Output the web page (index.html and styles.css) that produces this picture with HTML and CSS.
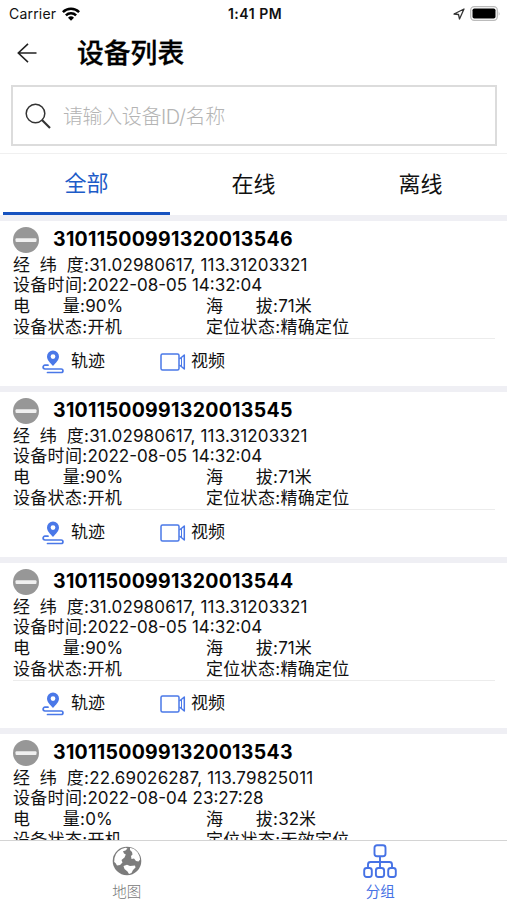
FILE: index.html
```
<!DOCTYPE html>
<html lang="zh-CN">
<head>
    <meta charset="UTF-8">
    <title>设备列表</title>
    <link rel="stylesheet" href="styles.css">
</head>
<body>
<svg class="defs">
    <symbol id="i-off" viewBox="0 0 26 26">
        <circle cx="13" cy="13" r="13" fill="#979797"/>
        <rect x="2.500" y="11.300" width="21" height="3.600" rx="1" fill="#f0f0f0"/>
    </symbol>
    <symbol id="i-track" viewBox="0 0 22 24">
        <path fill="#4a78e8" fill-rule="evenodd" d="M11 .5a6 6 0 0 1 6 6c0 3.400-3 6.200-6 9.500-3-3.300-6-6.100-6-9.500a6 6 0 0 1 6-6zm0 3.700a2.400 2.400 0 1 0 0 4.800 2.400 2.400 0 0 0 0-4.800z"/>
        <path fill="none" stroke="#4a78e8" stroke-width="1.700" stroke-linecap="round" d="M6 15.200H3a1.900 1.900 0 0 0 0 3.800h16.200a1.600 1.600 0 0 1 0 3.500H5.500"/>
    </symbol>
    <symbol id="i-video" viewBox="0 0 26 18">
        <g fill="none" stroke="#4a78e8" stroke-width="1.500" stroke-linejoin="round">
            <rect x="1" y="1" width="18" height="16" rx="1.500"/>
            <path d="M19.500 6l4.800-4v14l-4.800-4"/>
            <path d="M21.500 4.500v9" stroke-width="1"/>
        </g>
    </symbol>
</svg>
<div class="status">
    <div class="carrier">Carrier
        <svg width="18" height="14" viewBox="0 0 18 14">
            <g fill="none" stroke="#000" stroke-width="2.500">
                <path d="M.9 5.200a11.500 11.500 0 0 1 16.200 0"/>
                <path d="M3.900 8.300a7.200 7.200 0 0 1 10.200 0"/>
            </g>
            <path d="M9 13.700L6 10.700a4.300 4.300 0 0 1 6 0z"/>
        </svg>
    </div>
    <div class="time">1:41 PM</div>
    <div class="power">
        <svg width="12" height="12" viewBox="0 0 12 12"><path d="M1 6L11 1 6.500 11 5.500 6.500z" fill="none" stroke="#333" stroke-width="1.300" stroke-linejoin="round"/></svg>
        <svg width="31" height="15" viewBox="0 0 31 15">
            <rect x=".7" y=".7" width="26.600" height="13.600" rx="3.500" fill="#fff" stroke="#bbb" stroke-width="1.300"/>
            <rect x="2.500" y="2.500" width="23" height="10" rx="1.800"/>
            <path d="M28.700 5.200q1.800 2.300 0 4.600z" fill="#bbb"/>
        </svg>
    </div>
</div>
<div class="header">
    <svg width="20" height="20" viewBox="0 0 20 20"><path d="M19.500 10H1M11 .8L1.300 10l9.700 9.200" fill="none" stroke="#222" stroke-width="1.600"/></svg>
    <h1>设备列表</h1>
</div>
<div class="search">
    <svg width="26" height="26" viewBox="0 0 26 26"><circle cx="10.500" cy="10.500" r="9.300" fill="none" stroke="#333" stroke-width="1.500"/><path d="M17 17l8 8" stroke="#333" stroke-width="2.200"/></svg>
    <span>请输入设备ID/名称</span>
</div>
<ul class="tabs">
    <li class="on">全部</li>
    <li>在线</li>
    <li>离线</li>
</ul>
<div class="list">
    <div class="card">
        <div class="title"><svg width="26" height="26"><use href="#i-off"/></svg><b>31011500991320013546</b></div>
        <div class="row"><span class="label"><i>经</i><i>纬</i><i>度</i></span>:<em class="pos">31.02980617, 113.31203321</em></div>
        <div class="row">设备时间:<em>2022-08-05 14:32:04</em></div>
        <div class="row">
            <div class="col"><span class="label short"><i>电</i><i>量</i></span>:<em>90%</em></div>
            <div class="col"><span class="label short"><i>海</i><i>拔</i></span>:<em>71米</em></div>
        </div>
        <div class="row">
            <div class="col">设备状态:开机</div>
            <div class="col">定位状态:精确定位</div>
        </div>
        <div class="actions">
            <div class="track"><svg width="22" height="24"><use href="#i-track"/></svg>轨迹</div>
            <div class="video"><svg width="26" height="18"><use href="#i-video"/></svg>视频</div>
        </div>
    </div>
    <div class="card">
        <div class="title"><svg width="26" height="26"><use href="#i-off"/></svg><b>31011500991320013545</b></div>
        <div class="row"><span class="label"><i>经</i><i>纬</i><i>度</i></span>:<em class="pos">31.02980617, 113.31203321</em></div>
        <div class="row">设备时间:<em>2022-08-05 14:32:04</em></div>
        <div class="row">
            <div class="col"><span class="label short"><i>电</i><i>量</i></span>:<em>90%</em></div>
            <div class="col"><span class="label short"><i>海</i><i>拔</i></span>:<em>71米</em></div>
        </div>
        <div class="row">
            <div class="col">设备状态:开机</div>
            <div class="col">定位状态:精确定位</div>
        </div>
        <div class="actions">
            <div class="track"><svg width="22" height="24"><use href="#i-track"/></svg>轨迹</div>
            <div class="video"><svg width="26" height="18"><use href="#i-video"/></svg>视频</div>
        </div>
    </div>
    <div class="card">
        <div class="title"><svg width="26" height="26"><use href="#i-off"/></svg><b>31011500991320013544</b></div>
        <div class="row"><span class="label"><i>经</i><i>纬</i><i>度</i></span>:<em class="pos">31.02980617, 113.31203321</em></div>
        <div class="row">设备时间:<em>2022-08-05 14:32:04</em></div>
        <div class="row">
            <div class="col"><span class="label short"><i>电</i><i>量</i></span>:<em>90%</em></div>
            <div class="col"><span class="label short"><i>海</i><i>拔</i></span>:<em>71米</em></div>
        </div>
        <div class="row">
            <div class="col">设备状态:开机</div>
            <div class="col">定位状态:精确定位</div>
        </div>
        <div class="actions">
            <div class="track"><svg width="22" height="24"><use href="#i-track"/></svg>轨迹</div>
            <div class="video"><svg width="26" height="18"><use href="#i-video"/></svg>视频</div>
        </div>
    </div>
    <div class="card">
        <div class="title"><svg width="26" height="26"><use href="#i-off"/></svg><b>31011500991320013543</b></div>
        <div class="row"><span class="label"><i>经</i><i>纬</i><i>度</i></span>:<em class="pos">22.69026287, 113.79825011</em></div>
        <div class="row">设备时间:<em>2022-08-04 23:27:28</em></div>
        <div class="row">
            <div class="col"><span class="label short"><i>电</i><i>量</i></span>:<em>0%</em></div>
            <div class="col"><span class="label short"><i>海</i><i>拔</i></span>:<em>32米</em></div>
        </div>
        <div class="row">
            <div class="col">设备状态:开机</div>
            <div class="col">定位状态:无效定位</div>
        </div>
    </div>
</div>
<ul class="nav">
    <li>
        <svg width="30" height="30" viewBox="0 0 30 30">
            <circle cx="15" cy="15" r="14.300" fill="#7c7c7c"/>
            <path fill="#fff" d="M6 5.500l3.500-2.500 4-1.200 2 .7-2 2-2.500.8 1 2.200 1.800 1-1.300 3-3 2.500 1 2.500-2.500 2.500-3 .5-1.500-2.500-1.300-1 .3-4 1.500-4z"/>
            <path fill="#fff" d="M18 1.800l4 1.200 3.500 3.200 2 4 .6 3.300-1.600 2-2.500-.5-2-2.500-2.500.5-.5-3 1.500-1.500-.5-2.500-2-2z"/>
            <path fill="#fff" d="M11.500 20l3.500-1.200 3 1.300 5-.6.500 2-2.500 2.500-1.500 3-2.500 1-1.500-2.500-3-2.500z"/>
        </svg>
        地图
    </li>
    <li class="on">
        <svg width="34" height="34" viewBox="0 0 34 34">
            <g fill="none" stroke="#4672e5" stroke-width="1.900">
                <rect x="11.500" y="1.200" width="11" height="11" rx="2.500"/>
                <rect x="1.200" y="24" width="7.600" height="9" rx="2.500"/>
                <rect x="12.900" y="24" width="8.200" height="9" rx="2.500"/>
                <rect x="25.200" y="24" width="7.600" height="9" rx="2.500"/>
                <path d="M17 12.200V24M5 24v-3.500q0-2.500 2.500-2.500h19q2.500 0 2.500 2.500V24"/>
            </g>
        </svg>
        分组
    </li>
</ul>
</body>
</html>
```
FILE: styles.css
```
*{
    margin: 0;
    padding: 0;
    list-style: none;
    box-sizing: border-box;
}
body{
    height: 900px;
    display: flex;
    flex-direction: column;
    overflow: hidden;
    background: #fff;
    color: #111;
    font-family: Inter, "Noto Sans CJK SC", sans-serif;
}
svg{
    display: block;
    flex: none;
}
i,em{
    font-style: normal;
}
.defs{
    position: absolute;
    width: 0;
    height: 0;
}
.status{
    flex: none;
    height: 27px;
    padding: 0 6px 0 9px;
    display: grid;
    grid-template-columns: 1fr auto 1fr;
    align-items: center;
    font-size: 14px;
}
.carrier{
    display: flex;
    align-items: center;
    gap: 6px;
    letter-spacing: .2px;
}
.time{
    font-size: 14px;
    font-weight: 600;
    letter-spacing: .5px;
}
.power{
    display: flex;
    align-items: center;
    justify-content: flex-end;
    gap: 5px;
}
.header{
    flex: none;
    height: 51px;
    padding-left: 17px;
    display: flex;
    align-items: center;
    gap: 40px;
}
.header h1{
    font-size: 26.800px;
    line-height: 40px;
    font-weight: 500;
    color: #000;
    -webkit-text-stroke: .3px #000;
}
.search{
    flex: none;
    height: 61px;
    margin: 7px 10px 7px 11px;
    padding-left: 12px;
    display: flex;
    align-items: center;
    gap: 12px;
    border: 2px solid #dcdcdc;
    font-size: 20px;
    font-weight: 300;
    letter-spacing: -.4px;
    color: #b4b4b4;
}
.tabs{
    flex: none;
    height: 62px;
    padding: 0 3px;
    display: flex;
    border-top: 1px solid #f0f0f0;
}
.tabs li{
    flex: 1;
    line-height: 61px;
    text-align: center;
    font-size: 22px;
}
.tabs li.on{
    line-height: 59px;
    color: #1d5bc8;
    border-bottom: 3px solid #1652c0;
}
.list{
    flex: 1;
    min-height: 0;
    overflow: hidden;
    background: #efeff4;
}
.card{
    height: 165px;
    margin-top: 6px;
    padding: 5px 12px 0 13px;
    background: #fff;
    font-size: 17px;
}
.title{
    height: 28.500px;
    padding-bottom: 1px;
    display: flex;
    align-items: center;
    gap: 14px;
}
.title b{
    font-size: 19.500px;
    line-height: 24px;
    font-weight: 700;
    letter-spacing: .3px;
    padding-bottom: 2px;
    color: #000;
}
.row{
    height: 20.800px;
    line-height: 20.800px;
    display: flex;
    white-space: nowrap;
    letter-spacing: .3px;
}
.row em{
    letter-spacing: 0;
}
.row .pos{
    letter-spacing: .15px;
}
.col{
    width: 193px;
    display: flex;
}
.label{
    width: 71px;
    display: flex;
    justify-content: space-between;
}
.label.short{
    width: 67px;
}
.actions{
    height: 49px;
    padding: 0 0 2px 29px;
    display: flex;
    align-items: center;
    border-top: 1px solid #ececec;
}
.actions div{
    display: flex;
    align-items: center;
    gap: 7px;
    line-height: 22px;
    padding-bottom: 1px;
}
.actions svg{
    margin-top: 1px;
}
.actions .track{
    width: 118px;
}
.actions .video{
    gap: 5px;
}
.nav{
    flex: none;
    height: 60px;
    display: flex;
    border-top: 1px solid #d4d4d4;
    background: #fff;
}
.nav li{
    flex: 1;
    display: flex;
    flex-direction: column;
    align-items: center;
    justify-content: space-between;
    padding-top: 5px;
    font-size: 14.500px;
    line-height: 17px;
    font-weight: 300;
    color: #777;
}
.nav li.on{
    padding-top: 3px;
    font-weight: 400;
    color: #4672e5;
}
```
